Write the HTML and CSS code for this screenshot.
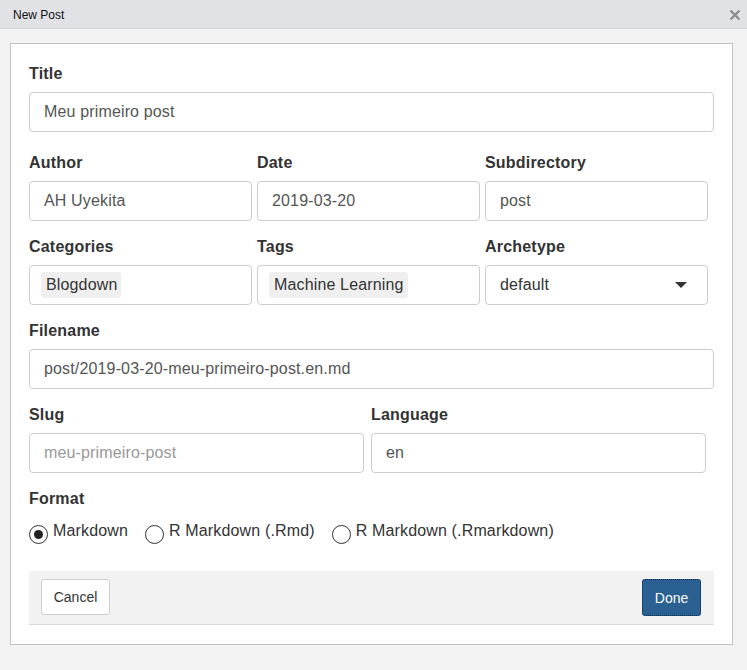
FILE: index.html
```html
<!DOCTYPE html>
<html lang="en">
<head>
<meta charset="utf-8">
<title>New Post</title>
<link rel="stylesheet" href="styles.css">
</head>
<body>
<div class="titlebar">
  <span class="title-text">New Post</span>
  <svg class="close" width="12" height="12" viewBox="0 0 12 12"><path d="M1.5 1.5 L10.5 10.5 M10.5 1.5 L1.5 10.5" stroke="#8a8a8a" stroke-width="2.2" fill="none"/></svg>
</div>
<div class="stage">
  <div class="panel">
    <div class="field">
      <label class="lbl">Title</label>
      <div class="input">Meu primeiro post</div>
    </div>
    <div class="row3 first">
      <div class="field"><label class="lbl">Author</label><div class="input">AH Uyekita</div></div>
      <div class="field"><label class="lbl">Date</label><div class="input">2019-03-20</div></div>
      <div class="field"><label class="lbl">Subdirectory</label><div class="input">post</div></div>
    </div>
    <div class="row3">
      <div class="field"><label class="lbl">Categories</label><div class="input chips"><span class="chip">Blogdown</span></div></div>
      <div class="field"><label class="lbl">Tags</label><div class="input chips"><span class="chip">Machine Learning</span></div></div>
      <div class="field"><label class="lbl">Archetype</label><div class="input select"><span>default</span><span class="caret"></span></div></div>
    </div>
    <div class="field gap">
      <label class="lbl">Filename</label>
      <div class="input">post/2019-03-20-meu-primeiro-post.en.md</div>
    </div>
    <div class="row2">
      <div class="field"><label class="lbl">Slug</label><div class="input placeholder">meu-primeiro-post</div></div>
      <div class="field"><label class="lbl">Language</label><div class="input">en</div></div>
    </div>
    <div class="field gap">
      <label class="lbl">Format</label>
      <div class="radios">
        <div class="radio"><span class="circle checked"></span><span class="rtext">Markdown</span></div>
        <div class="radio"><span class="circle"></span><span class="rtext">R Markdown (.Rmd)</span></div>
        <div class="radio"><span class="circle"></span><span class="rtext">R Markdown (.Rmarkdown)</span></div>
      </div>
    </div>
    <div class="footer">
      <button class="btn cancel">Cancel</button>
      <button class="btn done">Done</button>
    </div>
  </div>
</div>
</body>
</html>
```
FILE: styles.css
```css
html, body {
  margin: 0;
  padding: 0;
}
body {
  background: #f2f3f2;
  font-family: "Liberation Sans", Arial, sans-serif;
  width: 747px;
  height: 670px;
  overflow: hidden;
}
.titlebar {
  height: 28px;
  background: #e1e2e6;
  border-bottom: 1px solid #d4d5d8;
  display: flex;
  align-items: center;
  justify-content: space-between;
  padding: 0 6px 0 13px;
  box-sizing: content-box;
}
.title-text {
  font-size: 12px;
  color: #111;
  padding-top: 1px;
}
.close {
  display: block;
  margin-top: 1px;
}
.stage {
  padding: 14px 14px 0 10px;
}
.panel {
  background: #fff;
  border: 1px solid #c3c3c3;
  padding: 18px 18px 19px 18px;
}
.field {
  display: flex;
  flex-direction: column;
}
.lbl {
  font-size: 16px;
  font-weight: bold;
  color: #333;
  line-height: 22px;
  padding-top: 1px;
  margin-bottom: 7px;
  letter-spacing: 0.2px;
}
.input {
  height: 40px;
  box-sizing: border-box;
  border: 1px solid #cccccc;
  border-radius: 4px;
  padding: 0 14px;
  font-size: 16px;
  color: #555;
  display: flex;
  align-items: center;
  white-space: nowrap;
  letter-spacing: 0.15px;
}
.placeholder {
  color: #999;
}
.chips {
  padding-left: 11px;
}
.chip {
  background: #efefef;
  border-radius: 3px;
  padding: 0 4px 0 5px;
  line-height: 26px;
  color: #333;
}
.select {
  justify-content: space-between;
  padding-right: 20px;
  color: #333;
}
.caret {
  width: 0;
  height: 0;
  border-left: 6px solid transparent;
  border-right: 6px solid transparent;
  border-top: 6px solid #333;
}
.row3 {
  display: grid;
  grid-template-columns: 223px 223px 223px;
  column-gap: 5px;
  margin-top: 14px;
}
.row3.first {
  margin-top: 19px;
}
.row2 {
  display: grid;
  grid-template-columns: 335px 335px;
  column-gap: 7px;
  margin-top: 14px;
}
.gap {
  margin-top: 14px;
}
.radios {
  display: flex;
  gap: 17px;
  margin-top: 4px;
}
.radio {
  display: flex;
  align-items: flex-start;
  gap: 5px;
}
.rtext {
  font-size: 16px;
  line-height: 20px;
  color: #333;
  letter-spacing: 0.15px;
}
.circle {
  width: 19px;
  height: 19px;
  box-sizing: border-box;
  border: 1px solid #333;
  border-radius: 50%;
  margin-top: 4px;
  display: flex;
  align-items: center;
  justify-content: center;
  background: #fff;
}
.circle.checked::after {
  content: "";
  width: 9px;
  height: 9px;
  border-radius: 50%;
  background: #222;
}
.footer {
  margin-top: 27px;
  background: #f2f2f2;
  border-bottom: 1px solid #dcdcdc;
  display: flex;
  justify-content: space-between;
  align-items: flex-start;
  padding: 8px 13px 8px 12px;
}
.btn {
  font-family: "Liberation Sans", Arial, sans-serif;
  font-size: 14px;
  height: 36px;
  border-radius: 3px;
  cursor: pointer;
}
.cancel {
  width: 69px;
  background: #fff;
  border: 1px solid #cfcfcf;
  color: #333;
}
.done {
  width: 59px;
  height: 37px;
  background: #2b6092;
  border: 1px dotted #0b2c4c;
  color: #fff;
}
```
